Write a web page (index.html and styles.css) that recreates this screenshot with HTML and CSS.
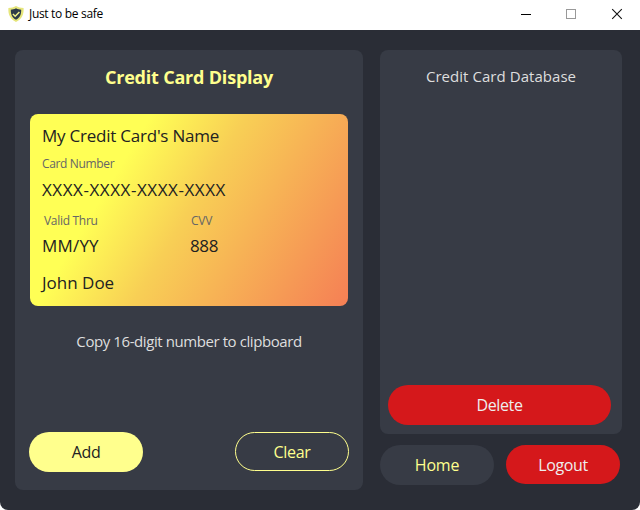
FILE: index.html
```html
<!DOCTYPE html>
<html lang="en">
<head>
<meta charset="utf-8">
<title>Just to be safe</title>
<link rel="stylesheet" href="styles.css">
</head>
<body>
<div class="window">
  <header class="titlebar">
    <svg class="shield" width="16" height="16" viewBox="0 0 16 16">
      <path d="M8 0C10 1.4 12.6 1.8 15.6 2C16 8.4 14 13.2 8 16C2 13.2 0 8.4 0.4 2C3.4 1.8 6 1.4 8 0Z" fill="#e6e67c"/>
      <path d="M8 2.3C9.8 3.3 11.4 3.6 13.2 3.7C13.3 8.4 11.9 11.6 8 13.7C4.1 11.6 2.7 8.4 2.8 3.7C4.6 3.6 6.2 3.3 8 2.3Z" fill="#2c3a49"/>
      <path d="M4.9 8L7.2 10.2L11.4 5.9" fill="none" stroke="#f0f08c" stroke-width="1.5"/>
    </svg>
    <span class="app-title">Just to be safe</span>
    <svg class="controls" width="104" height="12" viewBox="0 0 104 12" fill="none" shape-rendering="crispEdges">
      <path d="M0 6.5H10" stroke="#000"/>
      <rect x="45.5" y="1.5" width="9" height="9" stroke="#999"/>
      <path d="M91.2 1.2L100.8 10.8M100.8 1.2L91.2 10.8" stroke="#111" stroke-width="1.1" shape-rendering="auto"/>
    </svg>
  </header>
  <main class="content">
    <section class="panel display">
      <h1 class="heading">Credit Card Display</h1>
      <div class="card">
        <div class="value name">My Credit Card's Name</div>
        <div class="label number-label">Card Number</div>
        <div class="value number">XXXX-XXXX-XXXX-XXXX</div>
        <div class="details">
          <div class="label valid-label">Valid Thru</div>
          <div class="label cvv-label">CVV</div>
          <div class="value date">MM/YY</div>
          <div class="value cvv">888</div>
        </div>
        <div class="value holder">John Doe</div>
      </div>
      <div class="copy">Copy 16-digit number to clipboard</div>
      <div class="actions">
        <button class="button add">Add</button>
        <button class="button clear">Clear</button>
      </div>
    </section>
    <div class="sidebar">
      <section class="panel database">
        <h2 class="subheading">Credit Card Database</h2>
        <button class="button delete">Delete</button>
      </section>
      <nav class="nav">
        <button class="button home">Home</button>
        <button class="button logout">Logout</button>
      </nav>
    </div>
  </main>
</div>
</body>
</html>
```
FILE: styles.css
```css
* { box-sizing: border-box; }
body { margin: 0; background: #fff; font-family: "Open Sans", "Noto Sans", sans-serif; }
.window { width: 640px; height: 510px; }
.titlebar { display: flex; align-items: center; height: 30px; padding: 0 15px 2px 8px; background: #fff; }
.shield { flex: none; }
.app-title { margin-left: 5px; font-size: 12px; line-height: 16px; letter-spacing: -0.32px; color: #000; }
.controls { margin-left: auto; }
.content { display: flex; gap: 17px; height: 480px; padding: 20px 18px 20px 15px; background: #2a2d36; border-radius: 0 0 8px 8px; }
.panel { display: flex; flex-direction: column; background: #373b45; border-radius: 8px; }
.display { width: 348px; height: 440px; padding: 0 14px 18px; }
.heading { margin: 14px 0 0; font-size: 18px; line-height: 26px; font-weight: 700; letter-spacing: -0.2px; text-align: center; color: #ffff8d; }
.card { width: 318px; height: 192px; margin: 24px 0 0 1px; padding: 10px 12px 0; border-radius: 8px; background: linear-gradient(121.1deg, #ffff55 0%, #ffff55 28%, #f8cf55 50%, #f57f55 100%); }
.value { font-size: 17px; line-height: 24px; color: #222; white-space: nowrap; }
.label { font-size: 12px; line-height: 16px; letter-spacing: -0.2px; color: #666; white-space: nowrap; }
.name { letter-spacing: -0.23px; }
.number-label { margin-top: 8px; letter-spacing: -0.35px; }
.number { margin-top: 6px; letter-spacing: 0.55px; }
.details { display: grid; grid-template-columns: 148px auto; margin-top: 11px; row-gap: 5px; }
.valid-label { padding-left: 2px; letter-spacing: -0.3px; }
.cvv-label { padding-left: 1px; }
.date { letter-spacing: 0.2px; }
.cvv { letter-spacing: -0.4px; }
.holder { margin-top: 13px; letter-spacing: 0; }
.copy { margin-top: 23px; font-size: 15px; line-height: 24px; letter-spacing: -0.42px; text-align: center; color: #dedede; }
.actions { display: flex; justify-content: space-between; height: 40px; margin-top: auto; }
.button { width: 114px; height: 40px; padding: 0; border: 0; border-radius: 20px; font: 400 16px/24px "Open Sans", sans-serif; letter-spacing: -0.35px; }
.add { background: #ffff8d; color: #222; }
.clear { height: 39px; border: 1px solid #ffff8d; background: transparent; color: #ffff8d; }
.sidebar { width: 242px; }
.database { height: 384px; padding: 14px 8px 9px; }
.subheading { margin: 0; font-size: 15px; line-height: 24px; font-weight: 400; letter-spacing: 0.05px; text-align: center; color: #dedede; }
.delete { width: 223px; margin-top: auto; background: #d5181b; color: #eee; }
.nav { display: flex; gap: 12px; margin-top: 11px; }
.home { background: #373b45; color: #ffff8d; letter-spacing: -0.2px; }
.logout { height: 39px; background: #d5181b; color: #eee; }
```
